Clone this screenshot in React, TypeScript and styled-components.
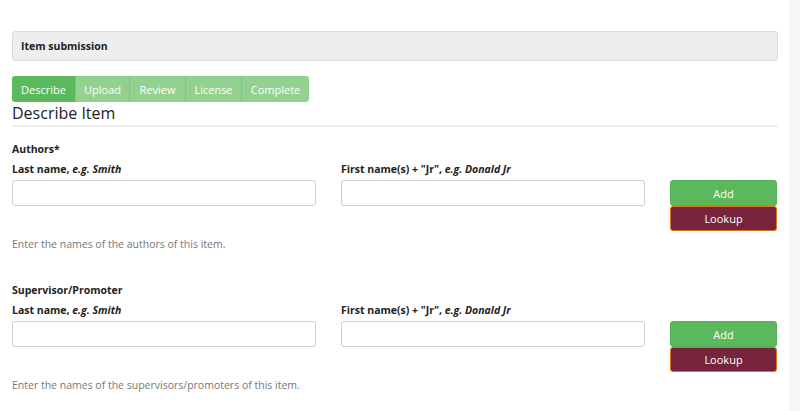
import React from "react";
import styled, { createGlobalStyle } from "styled-components";

const Global = createGlobalStyle`
  html, body { margin: 0; padding: 0; background: #fff; }
  body { font-family: "Open Sans", "Noto Sans", sans-serif; color: #333; }
  * { box-sizing: border-box; }
`;

const Page = styled.div`
  display: flex;
  width: 800px;
  height: 411px;
  overflow: hidden;
`;

const Main = styled.div`
  flex: 1;
  padding: 31px 11px 0 12px;
`;

const ScrollTrack = styled.div`
  width: 11px;
  background: #f6f6f6;
`;

const PanelHeading = styled.div`
  height: 30px;
  background: #eeeeee;
  border: 1px solid #dcdcdc;
  border-radius: 3px;
  display: flex;
  align-items: center;
  padding: 0 8px;
  font-size: 10.5px;
  font-weight: 700;
  color: #222;
`;

const Tabs = styled.div`
  display: flex;
  margin-top: 15px;
  width: max-content;
  border-radius: 3px;
  overflow: hidden;
`;

const Tab = styled.div<{ $active?: boolean; $w: number }>`
  width: ${(p) => p.$w}px;
  height: 26px;
  display: flex;
  align-items: center;
  justify-content: center;
  font-size: 11px;
  color: #fff;
  background: ${(p) => (p.$active ? "#5cb85c" : "#93d191")};
  border-left: ${(p) => (p.$active ? "none" : "1px solid #7fc67d")};
`;

const Title = styled.h2`
  margin: 0;
  font-size: 16px;
  font-weight: 400;
  color: #222;
  line-height: 22px;
  padding-bottom: 1px;
  border-bottom: 2px solid #eeeeee;
`;

const Section = styled.div<{ $top: number }>`
  margin-top: ${(p) => p.$top}px;
`;

const GroupLabel = styled.div`
  font-size: 10.5px;
  font-weight: 700;
  color: #222;
  line-height: 14px;
`;

const Grid = styled.div`
  display: grid;
  grid-template-columns: 304px 304px 107px;
  column-gap: 25px;
  margin-top: 6px;
`;

const Field = styled.div`
  display: flex;
  flex-direction: column;
`;

const FieldLabel = styled.div`
  font-size: 10.5px;
  font-weight: 700;
  color: #222;
  line-height: 14px;
  height: 14px;
  margin-bottom: 4px;
  em { font-style: italic; }
`;

const Input = styled.input`
  height: 26px;
  border: 1px solid #cfcfcf;
  border-radius: 3px;
  background: #fff;
  outline: none;
`;

const Buttons = styled.div`
  display: flex;
  flex-direction: column;
  padding-top: 18px;
`;

const Btn = styled.button<{ $kind: "add" | "lookup" }>`
  height: ${(p) => (p.$kind === "add" ? 26 : 25)}px;
  border-radius: 3px;
  font-family: inherit;
  font-size: 11px;
  color: #fff;
  cursor: pointer;
  padding: 0;
  background: ${(p) => (p.$kind === "add" ? "#5cb85c" : "#76243b")};
  border: 1px solid ${(p) => (p.$kind === "add" ? "#55b155" : "#d9741f")};
`;

const Help = styled.div`
  margin-top: 6px;
  font-size: 10.5px;
  color: #777;
  line-height: 14px;
`;

function Row({ title, help, top }: { title: string; help: string; top: number }) {
  return (
    <Section $top={top}>
      <GroupLabel>{title}</GroupLabel>
      <Grid>
        <Field>
          <FieldLabel>
            Last name, <em>e.g. Smith</em>
          </FieldLabel>
          <Input />
        </Field>
        <Field>
          <FieldLabel>
            First name(s) + "Jr", <em>e.g. Donald Jr</em>
          </FieldLabel>
          <Input />
        </Field>
        <Buttons>
          <Btn $kind="add">Add</Btn>
          <Btn $kind="lookup">Lookup</Btn>
        </Buttons>
      </Grid>
      <Help>{help}</Help>
    </Section>
  );
}

export default function App() {
  const tabs = [
    { t: "Describe", w: 63 },
    { t: "Upload", w: 54 },
    { t: "Review", w: 56 },
    { t: "License", w: 56 },
    { t: "Complete", w: 68 },
  ];
  return (
    <>
      <Global />
      <Page>
        <Main>
          <PanelHeading>Item submission</PanelHeading>
          <Tabs>
            {tabs.map((x, i) => (
              <Tab key={x.t} $active={i === 0} $w={x.w}>
                {x.t}
              </Tab>
            ))}
          </Tabs>
          <Title>Describe Item</Title>
          <Row top={15} title="Authors*" help="Enter the names of the authors of this item." />
          <Row top={32} title="Supervisor/Promoter" help="Enter the names of the supervisors/promoters of this item." />
        </Main>
        <ScrollTrack />
      </Page>
    </>
  );
}
